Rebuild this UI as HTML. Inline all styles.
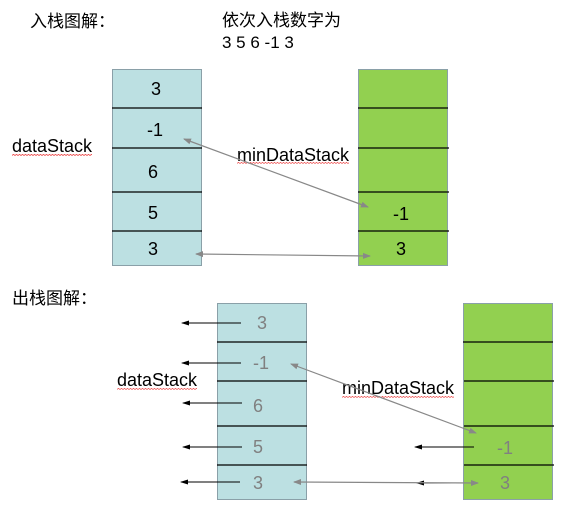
<!DOCTYPE html>
<html><head><meta charset="utf-8"><style>
html,body{margin:0;padding:0;background:#fff;width:582px;height:514px;overflow:hidden}
svg{display:block}
text{font-family:"Liberation Sans","Noto Sans CJK SC",sans-serif}
</style></head><body>
<svg width="582" height="514" viewBox="0 0 582 514" xmlns="http://www.w3.org/2000/svg">
<defs>
<marker id="ag" markerWidth="8" markerHeight="8" refX="7" refY="4" orient="auto-start-reverse" markerUnits="userSpaceOnUse"><path d="M0,1 L8,4 L0,7 z" fill="#888"/></marker>
<marker id="ab" markerWidth="8" markerHeight="8" refX="7" refY="4" orient="auto-start-reverse" markerUnits="userSpaceOnUse"><path d="M0,1.5 L8,4 L0,6.5 z" fill="#000"/></marker>
<path id="zz" d="M0,1.5 l1.5,-1.2 l1.5,1.2 l1.5,-1.2 l1.5,1.2 l1.5,-1.2 l1.5,1.2 l1.5,-1.2 l1.5,1.2 l1.5,-1.2 l1.5,1.2 l1.5,-1.2 l1.5,1.2 l1.5,-1.2 l1.5,1.2 l1.5,-1.2 l1.5,1.2 l1.5,-1.2 l1.5,1.2 l1.5,-1.2 l1.5,1.2 l1.5,-1.2 l1.5,1.2 l1.5,-1.2 l1.5,1.2 l1.5,-1.2 l1.5,1.2 l1.5,-1.2 l1.5,1.2 l1.5,-1.2 l1.5,1.2 l1.5,-1.2 l1.5,1.2 l1.5,-1.2 l1.5,1.2 l1.5,-1.2 l1.5,1.2 l1.5,-1.2 l1.5,1.2 l1.5,-1.2 l1.5,1.2 l1.5,-1.2 l1.5,1.2 l1.5,-1.2 l1.5,1.2 l1.5,-1.2 l1.5,1.2 l1.5,-1.2 l1.5,1.2 l1.5,-1.2 l1.5,1.2 l1.5,-1.2 l1.5,1.2 l1.5,-1.2 l1.5,1.2 l1.5,-1.2 l1.5,1.2 l1.5,-1.2 l1.5,1.2 l1.5,-1.2 l1.5,1.2 l1.5,-1.2 l1.5,1.2 l1.5,-1.2 l1.5,1.2 l1.5,-1.2 l1.5,1.2 l1.5,-1.2 l1.5,1.2 l1.5,-1.2 l1.5,1.2 l1.5,-1.2 l1.5,1.2 l1.5,-1.2 l1.5,1.2 l1.5,-1.2 l1.5,1.2" stroke="#e55" stroke-width="0.7" fill="none"/>
<clipPath id="c1"><rect x="0" y="0" width="80" height="4"/></clipPath>
<clipPath id="c2"><rect x="0" y="0" width="112" height="4"/></clipPath>
</defs>
<g font-size="17" fill="#000" font-family="Noto Sans CJK SC">
<text x="30" y="27">入栈图解：</text>
<text x="222" y="26">依次入栈数字为</text>
<text x="12" y="304">出栈图解：</text>
</g>
<text x="222" y="48" font-size="17">3 5 6 -1 3</text>
<!-- top stacks -->
<rect x="112.5" y="69.5" width="89" height="196" fill="#bce0e2" stroke="#8aa0a8"/>
<g stroke="#000" stroke-width="1.2">
<line x1="112" y1="108" x2="202" y2="108"/><line x1="112" y1="148" x2="202" y2="148"/><line x1="112" y1="192" x2="202" y2="192"/><line x1="112" y1="231" x2="202" y2="231"/>
</g>
<rect x="358.5" y="69.5" width="89" height="196" fill="#92d050" stroke="#8aa0a8"/>
<g stroke="#000" stroke-width="1.2">
<line x1="358" y1="108" x2="448" y2="108"/><line x1="358" y1="148" x2="449" y2="148"/><line x1="358" y1="192" x2="449" y2="192"/><line x1="358" y1="231" x2="449" y2="231"/>
</g>
<g font-size="18" fill="#000">
<text x="151" y="95">3</text><text x="147" y="136">-1</text><text x="148" y="178">6</text><text x="148" y="219">5</text><text x="148" y="255">3</text>
<text x="393" y="220">-1</text><text x="396" y="255">3</text>
<text x="12" y="152">dataStack</text>
<text x="237" y="161">minDataStack</text>
</g>
<use href="#zz" x="12" y="154" clip-path="url(#c1)" transform="translate(0,0)"/>
<g transform="translate(12,154)"><g clip-path="url(#c1)"><use href="#zz"/></g></g>
<g transform="translate(237,162)"><g clip-path="url(#c2)"><use href="#zz"/></g></g>
<line x1="184" y1="139" x2="368" y2="207" stroke="#888" stroke-width="1.2" marker-start="url(#ag)" marker-end="url(#ag)"/>
<line x1="196" y1="254" x2="370" y2="256" stroke="#888" stroke-width="1.2" marker-start="url(#ag)" marker-end="url(#ag)"/>
<!-- bottom stacks -->
<rect x="217.5" y="303.5" width="89" height="196" fill="#bce0e2" stroke="#8aa0a8"/>
<g stroke="#000" stroke-width="1.2">
<line x1="217" y1="342" x2="307" y2="342"/><line x1="217" y1="381" x2="307" y2="381"/><line x1="217" y1="426" x2="307" y2="426"/><line x1="217" y1="465" x2="307" y2="465"/>
</g>
<rect x="463.5" y="303.5" width="89" height="196" fill="#92d050" stroke="#8aa0a8"/>
<g stroke="#000" stroke-width="1.2">
<line x1="463" y1="342" x2="553" y2="342"/><line x1="464" y1="381" x2="554" y2="381"/><line x1="464" y1="426" x2="554" y2="426"/><line x1="464" y1="465" x2="554" y2="465"/>
</g>
<g font-size="18" fill="#808080">
<text x="257" y="329">3</text><text x="253" y="369">-1</text><text x="253" y="412">6</text><text x="253" y="453">5</text><text x="253" y="489">3</text>
<text x="497" y="454">-1</text><text x="500" y="489">3</text>
</g>
<g font-size="18" fill="#000">
<text x="117" y="386">dataStack</text>
<text x="342" y="394">minDataStack</text>
</g>
<g transform="translate(117,388)"><g clip-path="url(#c1)"><use href="#zz"/></g></g>
<g transform="translate(342,396)"><g clip-path="url(#c2)"><use href="#zz"/></g></g>
<g stroke="#000" stroke-width="1">
<line x1="241" y1="323" x2="182" y2="323" marker-end="url(#ab)"/>
<line x1="241" y1="363" x2="182" y2="363" marker-end="url(#ab)"/>
<line x1="242" y1="403" x2="183" y2="403" marker-end="url(#ab)"/>
<line x1="242" y1="447" x2="183" y2="447" marker-end="url(#ab)"/>
<line x1="240" y1="482" x2="181" y2="482" marker-end="url(#ab)"/>
<line x1="474" y1="447" x2="415" y2="447" marker-end="url(#ab)"/>
<line x1="476" y1="483" x2="417" y2="483" marker-end="url(#ab)"/>
</g>
<line x1="291" y1="364" x2="476" y2="433" stroke="#888" stroke-width="1.2" marker-start="url(#ag)" marker-end="url(#ag)"/>
<line x1="294" y1="482" x2="478" y2="483" stroke="#888" stroke-width="1.2" marker-start="url(#ag)" marker-end="url(#ag)"/>
</svg>
</body></html>
